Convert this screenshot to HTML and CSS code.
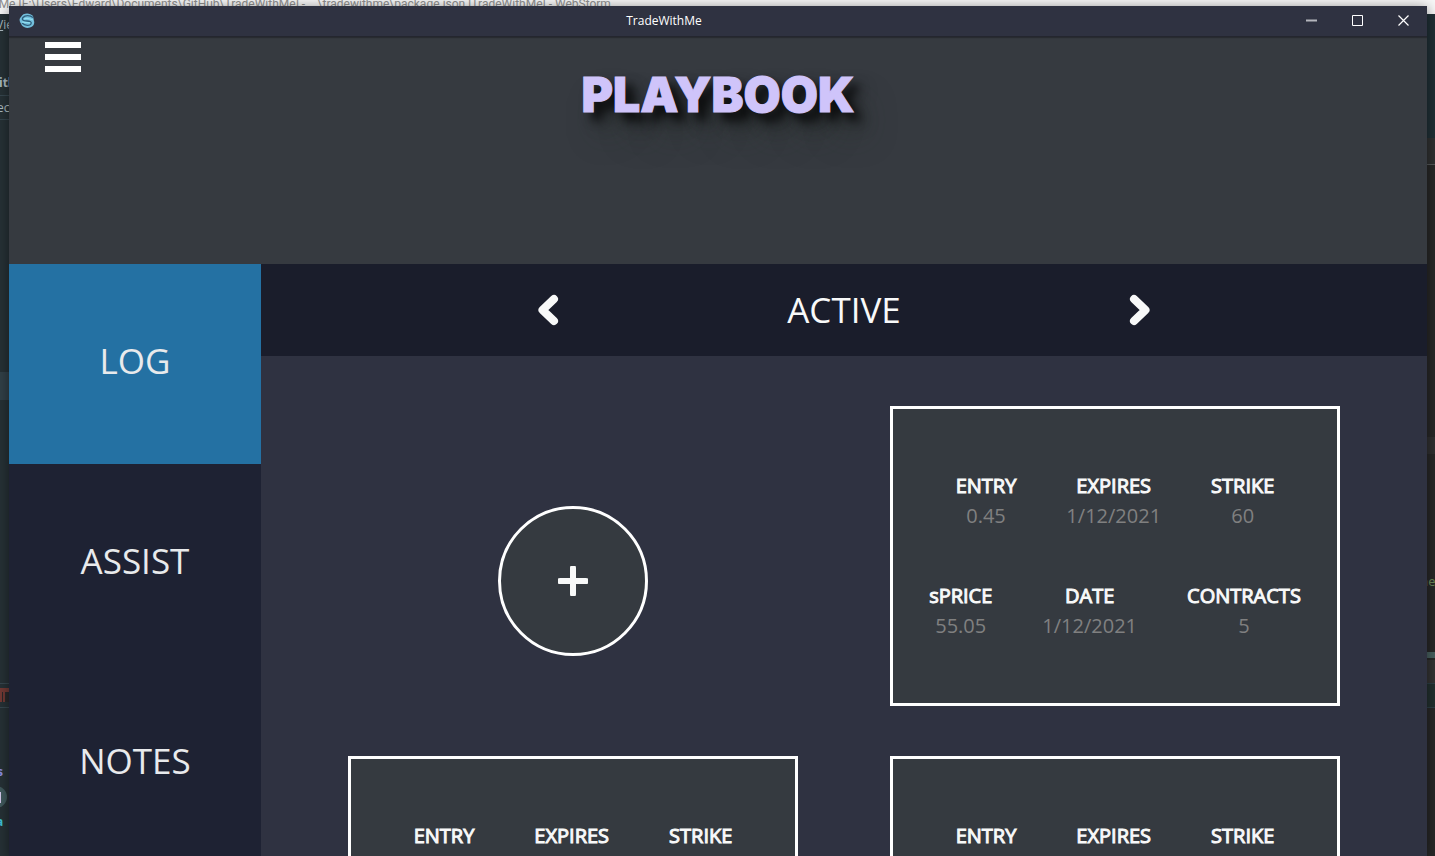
FILE: index.html
```html
<!DOCTYPE html>
<html lang="en">
<head>
<meta charset="utf-8">
<title>TradeWithMe</title>
<link rel="stylesheet" href="styles.css">
</head>
<body>
<div class="desktop">
  <div class="ide" aria-hidden="true">
    <div class="ide-title">nMe [E:\Users\Edward\Documents\GitHub\TradeWithMe] - ...\tradewithme\package.json [TradeWithMe] - WebStorm</div>
    <div class="ide-left">
      <span class="frag frag-view"><u>V</u>ie</span>
      <span class="frag frag-crumb">ith</span>
      <span class="frag frag-project">ec</span>
      <i class="rule rule-a"></i><i class="rule rule-b"></i>
      <i class="selected"></i>
      <i class="rule rule-c"></i><i class="rule rule-d"></i>
      <i class="run-mark"></i>
      <span class="frag frag-s">s</span>
      <i class="avatar"></i><i class="avatar-mark"></i>
      <span class="frag frag-a">a</span>
    </div>
    <div class="ide-right">
      <i class="line-a"></i><i class="line-b"></i><i class="line-c"></i><i class="line-d"></i><i class="line-e"></i>
      <span class="frag frag-code">ne</span>
    </div>
  </div>

  <div class="window">
    <header class="titlebar">
      <svg class="app-icon" viewBox="0 0 16 16" aria-hidden="true">
        <path d="M2 4C4-.5 11-.5 14 3l1 5c1 3-1 6-4 6.500-3 1-6 0-8-2L1 9C0 6 1 5 2 4z" fill="#73bfdc"/>
        <path d="M14 4.500C11 2 6 2 4 4.500S5 8 8 8s5 1 4 3-6 2-9-1" fill="none" stroke="#2f5f7c" stroke-width="1.300"/>
        <path d="M5 6c3-2 5 0 9 1M3 9c4 1 7 0 8 1" fill="none" stroke="#91e0f2" stroke-width="1.200"/>
      </svg>
      <span class="app-name">TradeWithMe</span>
      <div class="window-buttons">
        <button type="button" aria-label="Minimize"><svg viewBox="0 0 12 12"><path d="M0 5.500h11" stroke="#b5b6bd" stroke-width="2"/></svg></button>
        <button type="button" aria-label="Maximize"><svg viewBox="0 0 12 12"><path d="M.5.500h10v10H.500z" fill="none" stroke="#fff"/></svg></button>
        <button type="button" aria-label="Close"><svg viewBox="0 0 12 12"><path d="M.5.500l10 10M10.500.500l-10 10" stroke="#fff" stroke-width="1.200"/></svg></button>
      </div>
    </header>

    <div class="banner">
      <button class="menu" type="button" aria-label="Menu"><i></i><i></i><i></i></button>
      <h1>PLAYBOOK</h1>
    </div>

    <div class="body">
      <nav class="sidebar">
        <a class="current" href="#log">LOG</a>
        <a href="#assist">ASSIST</a>
        <a href="#notes">NOTES</a>
      </nav>
      <main class="content">
        <div class="switcher">
          <button type="button" aria-label="Previous"><svg viewBox="0 0 22 32"><path d="M17 5L5.500 16 17 27" /></svg></button>
          <h2>ACTIVE</h2>
          <button type="button" aria-label="Next"><svg viewBox="0 0 22 32"><path d="M5 5l11.500 11L5 27"/></svg></button>
        </div>
        <div class="cards">
          <button class="add" type="button" aria-label="Add trade"><svg viewBox="0 0 30 30"><path d="M15 2v26M2 15h26"/></svg></button>
          <article class="card">
            <dl>
              <div><dt>ENTRY</dt><dd>0.45</dd></div>
              <div><dt>EXPIRES</dt><dd>1/12/2021</dd></div>
              <div><dt>STRIKE</dt><dd>60</dd></div>
            </dl>
            <dl>
              <div><dt>sPRICE</dt><dd>55.05</dd></div>
              <div><dt>DATE</dt><dd>1/12/2021</dd></div>
              <div><dt>CONTRACTS</dt><dd>5</dd></div>
            </dl>
          </article>
          <article class="card">
            <dl>
              <div><dt>ENTRY</dt><dd>0.45</dd></div>
              <div><dt>EXPIRES</dt><dd>1/12/2021</dd></div>
              <div><dt>STRIKE</dt><dd>60</dd></div>
            </dl>
            <dl>
              <div><dt>sPRICE</dt><dd>55.05</dd></div>
              <div><dt>DATE</dt><dd>1/12/2021</dd></div>
              <div><dt>CONTRACTS</dt><dd>5</dd></div>
            </dl>
          </article>
          <article class="card">
            <dl>
              <div><dt>ENTRY</dt><dd>0.45</dd></div>
              <div><dt>EXPIRES</dt><dd>1/12/2021</dd></div>
              <div><dt>STRIKE</dt><dd>60</dd></div>
            </dl>
            <dl>
              <div><dt>sPRICE</dt><dd>55.05</dd></div>
              <div><dt>DATE</dt><dd>1/12/2021</dd></div>
              <div><dt>CONTRACTS</dt><dd>5</dd></div>
            </dl>
          </article>
        </div>
      </main>
    </div>
  </div>
</div>
</body>
</html>
```
FILE: styles.css
```css
* { box-sizing: border-box; }
html, body { height: 100%; }
body { margin: 0; overflow: hidden; font-family: "Open Sans", "Noto Sans", sans-serif; color: #f8f9f9; }
button { margin: 0; padding: 0; border: 0; background: none; color: inherit; font: inherit; cursor: pointer; }
h1, h2, dl, dd { margin: 0; }

.desktop { position: relative; height: 100vh; overflow: hidden; padding: 6px 8px 0 9px; background: #263136; }

/* Editor window lying behind the app */
.ide { position: absolute; inset: 0; }
.ide-title { height: 14px; overflow: hidden; background: #f7f7f7; color: #8f8f8f; font-family: Roboto, sans-serif; font-size: 12px; line-height: 8px; text-indent: -8px; white-space: nowrap; }
.ide-left { position: absolute; left: 0; top: 14px; bottom: 0; width: 9px; overflow: hidden; background: #263136; }
.ide-right { position: absolute; right: 0; top: 14px; bottom: 0; width: 8px; overflow: hidden; background: linear-gradient(#203036 124px, #303132 124px 150px, #282828 150px); }
.ide i { position: absolute; left: 0; width: 100%; }
.frag { position: absolute; left: 0; font-size: 12px; line-height: 16px; color: #aebcc2; white-space: nowrap; }
.frag-view { top: 3px; left: -4px; }
.frag-crumb { top: 61px; left: -1px; font-weight: 700; }
.frag-project { top: 86px; left: -3px; }
.frag-s { top: 750px; left: -3px; color: #8a8fe0; font-weight: 700; }
.frag-a { top: 800px; left: -4px; color: #3fc1d4; font-weight: 700; }
.frag-code { top: 560px; left: -6px; color: #6a8759; font-family: "DejaVu Sans Mono", monospace; }
.rule { height: 1px; background: #37474f; }
.rule-a { top: 81px; }
.rule-b { top: 105px; }
.rule-c { top: 669px; }
.rule-d { top: 693px; }
.selected { top: 358px; height: 28px; background: #314048; }
.run-mark { top: 674px; height: 14px; background: linear-gradient(90deg, #733a35 2px, #29292b 2px 3px, #733a35 3px 5px, #29292b 5px); border-top: 4px solid #733a35; }
.ide .avatar { top: 772px; left: -15px; width: 22px; height: 22px; border-radius: 50%; background: #40595c; }
.ide .avatar-mark { top: 778px; width: 1px; height: 11px; background: #d4c9ec; }
.line-a { top: 150px; height: 1px; background: #56595a; }
.line-b { top: 423px; height: 17px; background: #303031; }
.line-c { top: 638px; height: 6px; background: #48605f; }
.line-d { top: 646px; height: 23px; background: #333; }
.line-e { top: 669px; height: 25px; border: solid #2e4047; border-width: 1px 0; background: #22302f; }

.window { position: relative; display: flex; flex-direction: column; height: 100%; overflow: hidden; background: #2f3241; box-shadow: 0 2px 12px rgba(0, 0, 0, .5); }

.titlebar { flex: none; display: flex; align-items: center; height: 31px; border-bottom: 1px solid #24262f; background: #2f3241; box-shadow: 0 1px 1px rgba(0, 0, 0, .25); z-index: 1; }
.app-icon { flex: none; width: 16px; height: 16px; margin: 0 4px 0 10px; }
.app-name { flex: 1; font-size: 12px; line-height: 16px; color: #fff; text-align: center; }
.window-buttons { display: flex; }
.window-buttons button { width: 46px; height: 30px; display: grid; place-items: center; }
.window-buttons svg { width: 12px; height: 12px; display: block; }

.banner { flex: none; position: relative; height: 227px; padding-top: 29px; background: #363a40; text-align: center; }
.menu { position: absolute; left: 36px; top: 5px; width: 36px; display: grid; gap: 6px; }
.menu i { height: 6px; background: #fff; }
h1 { font-family: Inter, Roboto, sans-serif; font-size: 48px; font-weight: 900; line-height: 58px; color: #cfc4fa; -webkit-text-stroke: 1px currentColor; text-shadow: 8px 8px 10px rgba(0, 0, 0, .7), 12px 12px 16px rgba(0, 0, 0, .4), 16px 24px 32px rgba(40, 50, 40, .4); }

.body { flex: 1; display: flex; min-height: 0; }
.sidebar { flex: 0 0 252px; background: #1e2233; }
.sidebar a { display: flex; align-items: center; justify-content: center; height: 200px; padding-bottom: 6px; font-size: 35px; line-height: 48px; color: #e8eaec; text-decoration: none; }
.sidebar .current { background: #2471a3; }

.content { flex: 1; min-width: 0; }
.switcher { display: flex; align-items: center; justify-content: space-between; height: 92px; padding: 0 22%; background: #1a1d2b; }
.switcher h2 { font-size: 35px; font-weight: 400; line-height: 48px; }
.switcher button { width: 60px; height: 60px; display: grid; place-items: center; }
.switcher svg { width: 22px; height: 32px; fill: none; stroke: #f8f9f9; stroke-width: 8; stroke-linecap: round; stroke-linejoin: round; }

.cards { display: grid; grid-template-columns: 1fr 1fr; gap: 50px 0; place-items: center; padding: 50px 41px; }
.card { display: flex; flex-direction: column; justify-content: center; gap: 50px; width: 450px; height: 300px; border: 3px solid #fff; background: #353a40; }
.card dl { display: flex; justify-content: center; gap: 50px; font-size: 20px; line-height: 30px; text-align: center; }
.card dt { -webkit-text-stroke: 1px currentColor; }
.card dd { color: #808080; }

.add { width: 150px; height: 150px; margin-top: 50px; display: grid; place-items: center; border: 3px solid #fff; border-radius: 50%; background: #353a40; }
.add svg { width: 30px; height: 30px; fill: none; stroke: #f8f9f9; stroke-width: 6; stroke-linecap: round; }
```
